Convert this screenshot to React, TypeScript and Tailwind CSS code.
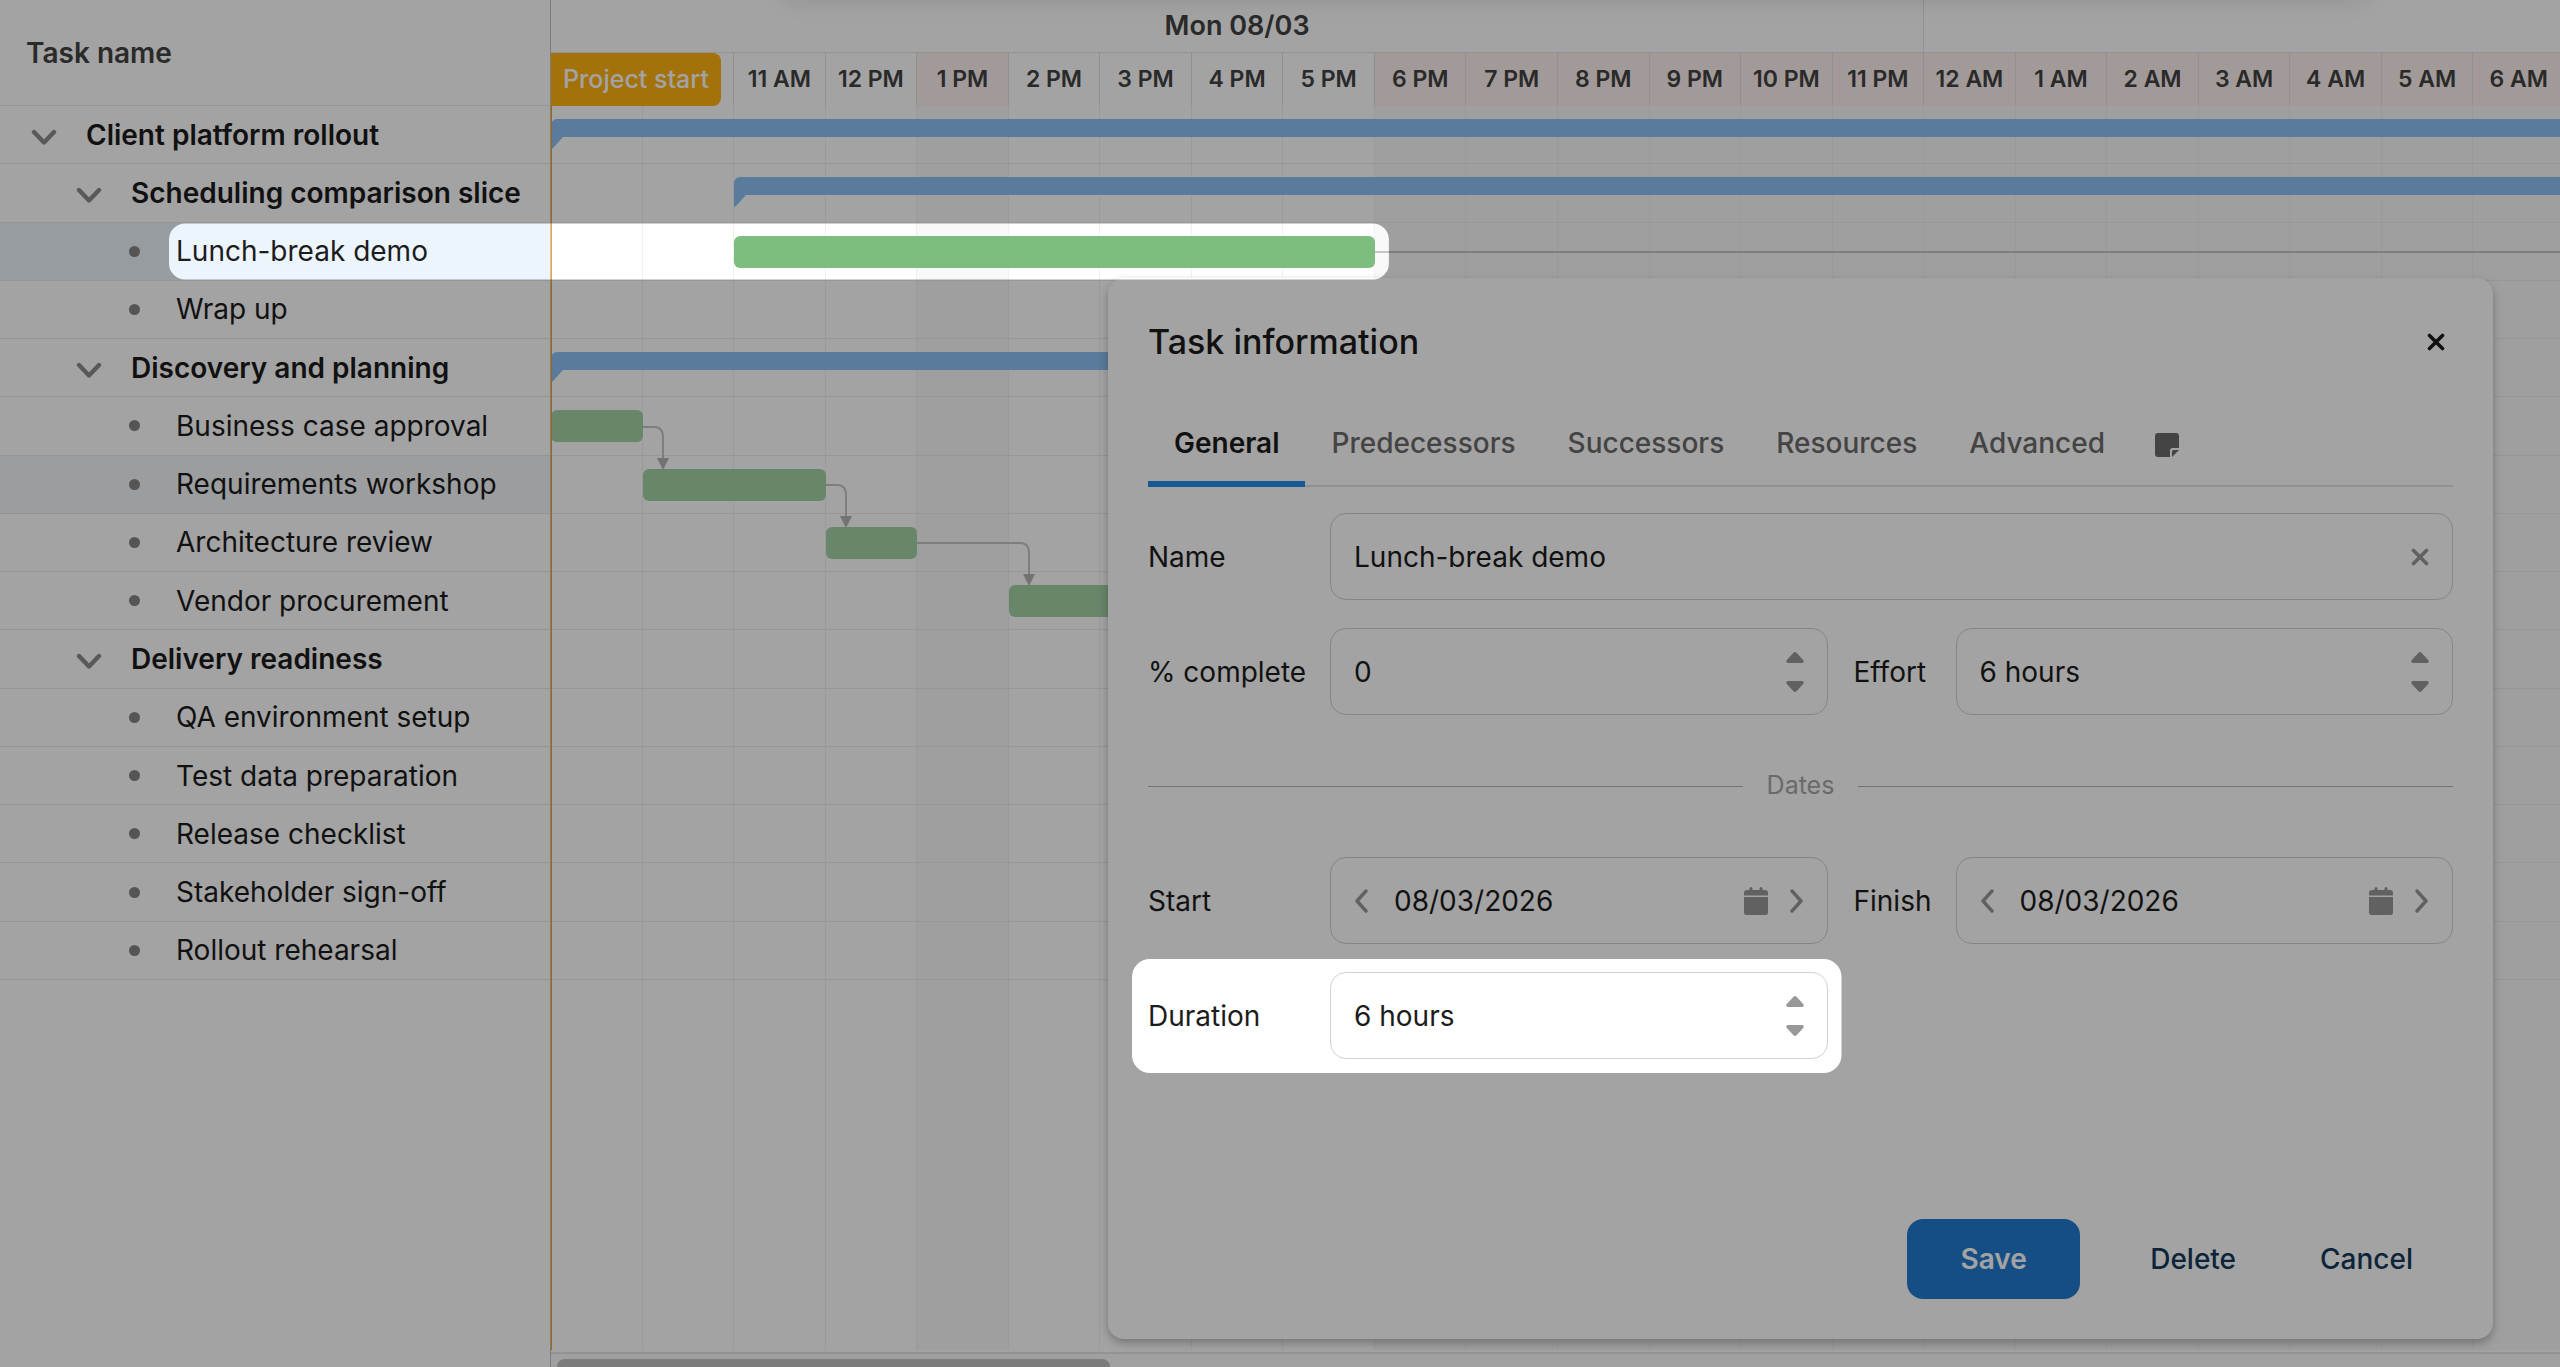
import { useLayoutEffect, useRef, useState } from 'react';
import type { ReactNode, RefObject } from 'react';
import clsx from 'clsx';

type Task = {
  name: string;
  level: number;
  parent?: boolean;
  start?: number;
  end?: number;
};

// Hours are counted from 9 AM, the left edge of the time axis
const HOURS_SHOWN = 22;

const tasks: Task[] = [
  { name: 'Client platform rollout', level: 0, parent: true, start: 0, end: 22 },
  { name: 'Scheduling comparison slice', level: 1, parent: true, start: 2, end: 22 },
  { name: 'Lunch-break demo', level: 2, start: 2, end: 9 },
  { name: 'Wrap up', level: 2 },
  { name: 'Discovery and planning', level: 1, parent: true, start: 0, end: 12 },
  { name: 'Business case approval', level: 2, start: 0, end: 1 },
  { name: 'Requirements workshop', level: 2, start: 1, end: 3 },
  { name: 'Architecture review', level: 2, start: 3, end: 4 },
  { name: 'Vendor procurement', level: 2, start: 5, end: 8 },
  { name: 'Delivery readiness', level: 1, parent: true },
  { name: 'QA environment setup', level: 2 },
  { name: 'Test data preparation', level: 2 },
  { name: 'Release checklist', level: 2 },
  { name: 'Stakeholder sign-off', level: 2 },
  { name: 'Rollout rehearsal', level: 2 },
];

const SELECTED = 2;
const HOVERED = 6;

const hours = Array.from({ length: HOURS_SHOWN }, (_, i) => {
  const h = (i + 9) % 24;
  return {
    label: `${h % 12 === 0 ? 12 : h % 12} ${h < 12 ? 'AM' : 'PM'}`,
    nonWorking: h === 13 || h >= 18 || h < 8,
  };
});

const tabs = ['General', 'Predecessors', 'Successors', 'Resources', 'Advanced'];

const levelPadding = ['pl-6', 'pl-[69px]', 'pl-[114px]'];

const percent = (h: number) => `${(h / HOURS_SHOWN) * 100}%`;

function CloseIcon({ className }: { className?: string }) {
  return (
    <svg viewBox="0 0 18 18" className={clsx('size-[18px]', className)} fill="none" stroke="currentColor" strokeWidth="3.6" strokeLinecap="round">
      <path d="M2.5 2.5 15.5 15.5M15.5 2.5 2.5 15.5" />
    </svg>
  );
}

function Chevron({ flip }: { flip?: boolean }) {
  return (
    <svg viewBox="0 0 14 24" className={clsx('h-6 w-3.5', flip && 'rotate-180')} fill="none" stroke="currentColor" strokeWidth="3.4" strokeLinecap="round" strokeLinejoin="round">
      <path d="M12 2 3 12l9 10" />
    </svg>
  );
}

function CalendarIcon() {
  return (
    <svg viewBox="0 0 24 28" className="h-7 w-6" fill="currentColor">
      <path d="M5.5 1.5a1.5 1.5 0 0 1 3 0V3h7V1.500a1.500 1.500 0 0 1 3 0V3H21a3 3 0 0 1 3 3v2.500H0V6a3 3 0 0 1 3-3h2.500Z" />
      <path d="M0 10h24v15.500a2.500 2.500 0 0 1-2.500 2.500h-19A2.500 2.500 0 0 1 0 25.500Z" />
    </svg>
  );
}

function NoteIcon() {
  return (
    <svg viewBox="0 0 24 24" className="size-6" fill="currentColor">
      <path d="M3 0h18a3 3 0 0 1 3 3v12h-6.500A2.500 2.500 0 0 0 15 17.500V24H3a3 3 0 0 1-3-3V3a3 3 0 0 1 3-3Z" />
      <path d="M17 24v-5.500a1.500 1.500 0 0 1 1.500-1.500H24Z" />
    </svg>
  );
}

function TreePane({ nameRef }: { nameRef: RefObject<HTMLSpanElement | null> }) {
  return (
    <div role="treegrid" className="w-[550px] shrink-0">
      <div className="flex h-[106px] items-center border-b border-[#e9e9e9] px-[26px] font-semibold text-[#424242]">Task name</div>
      <div className="grid h-[874px] auto-rows-fr">
        {tasks.map((task, i) => (
          <div
            key={task.name}
            role="row"
            className={clsx(
              'flex items-center gap-[22px] border-b border-[#e9e9e9]',
              levelPadding[task.level],
              i === SELECTED && 'bg-[#ecf4fc]',
              i === HOVERED && 'bg-[#f4f6f9]'
            )}
          >
            {task.parent ? (
              <button type="button" aria-label={`Collapse ${task.name}`} className="flex w-10 justify-center text-[#8c8c8c]">
                <svg viewBox="0 0 26 18" className="mt-1 h-[18px] w-[26px]" fill="none" stroke="currentColor" strokeWidth="4.400" strokeLinecap="round" strokeLinejoin="round">
                  <path d="M3 4 13 14.500 23 4" />
                </svg>
              </button>
            ) : (
              <span className="flex w-10 justify-center">
                <span className="size-[11px] rounded-full bg-[#858585]" />
              </span>
            )}
            <span ref={i === SELECTED ? nameRef : undefined} className={clsx('whitespace-nowrap', task.parent && 'font-semibold')}>
              {task.name}
            </span>
          </div>
        ))}
      </div>
    </div>
  );
}

function Dependencies() {
  return (
    <svg className="pointer-events-none absolute inset-0 size-full" fill="none" stroke="#c6c6c6" strokeWidth="2">
      <path d="M824 146H2200" />
      <path d="M92 321h11q9 0 9 10v24M275 379h11q9 0 9 10v24M366 437h103q9 0 9 10v24" />
      <g fill="#b4b4b4" stroke="none">
        <path d="M106 352h12l-6 12zM289 410h12l-6 12zM472 468h12l-6 12z" />
      </g>
    </svg>
  );
}

function TimeAxis({ barRef }: { barRef: RefObject<HTMLDivElement | null> }) {
  return (
    <div className="flex min-w-0 flex-1 flex-col overflow-hidden border-l border-[#c4c4c4]">
      <div className="flex w-[2014px] flex-1 flex-col">
        <div className="grid h-[53px] grid-cols-22 border-b border-[#e6e6e6] text-[27px] font-semibold text-[#424242]">
          <div className="col-span-15 flex items-center justify-center border-r border-[#e4e4e4]">Mon 08/03</div>
        </div>
        <div className="grid h-[53px] grid-cols-22 text-[23px] font-semibold text-[#424242]">
          {/* The project start flag covers the first two hours */}
          <div className="col-span-2 flex border-r border-[#e2e2e2]">
            <div className="flex w-[170px] items-center justify-center rounded-r-lg bg-[#ffb210] text-[25px] font-medium text-white">Project start</div>
          </div>
          {hours.slice(2).map((hour) => (
            <div
              key={hour.label}
              className={clsx('flex items-center justify-center border-r border-[#e2e2e2] whitespace-nowrap', hour.nonWorking && 'bg-[#fcf1f0]')}
            >
              {hour.label}
            </div>
          ))}
        </div>

        <div className="relative flex-1">
          <div className="absolute inset-0 grid grid-cols-22">
            {hours.map((hour) => (
              <div key={hour.label} className={clsx('border-r border-[#f1f1f1]', hour.nonWorking && 'bg-[#f9f9f9]')} />
            ))}
          </div>
          <div className="relative grid h-[874px] auto-rows-fr">
            {tasks.map((task, i) => (
              <div key={task.name} className="relative border-b border-[#ececec]">
                {task.start !== undefined && task.end !== undefined && (
                  <div
                    ref={i === SELECTED ? barRef : undefined}
                    className={clsx(
                      'absolute top-[13px]',
                      task.parent ? 'h-[18px] rounded-t-md bg-[#8ec0f2]' : 'h-8 rounded-md',
                      !task.parent && (i === SELECTED ? 'z-10 bg-[#7cbd80]' : 'bg-[#a2d2a6]')
                    )}
                    style={{ left: percent(task.start), width: percent(task.end - task.start) }}
                  >
                    {task.parent && (
                      <svg viewBox="0 0 12 12" className="absolute top-full left-0 size-3" fill="#8ec0f2">
                        <path d="M0 0h12L2 11q-1 1-2 0z" />
                      </svg>
                    )}
                  </div>
                )}
              </div>
            ))}
          </div>
          <Dependencies />
          <div className="absolute inset-y-0 left-0 w-px bg-[#f5a623]" />
        </div>
      </div>
      <div className="mt-0.5 h-[15px] border-t-2 border-[#e6e6e6] bg-[#fafafa] px-1.5 pt-[5px]">
        <div className="h-4 w-[553px] rounded-lg bg-[#c2c2c2]" />
      </div>
    </div>
  );
}

function FieldBox({ children, className, boxRef }: { children: ReactNode; className?: string; boxRef?: RefObject<HTMLDivElement | null> }) {
  return (
    <div ref={boxRef} className={clsx('flex h-[87px] min-w-0 items-center rounded-2xl border border-[#d2d2d2] px-[23px]', className)}>
      {children}
    </div>
  );
}

function SpinnerField({ id, value, boxRef }: { id: string; value: string; boxRef?: RefObject<HTMLDivElement | null> }) {
  return (
    <FieldBox boxRef={boxRef}>
      <input id={id} defaultValue={value} className="min-w-0 flex-1 bg-transparent outline-none" />
      <div className="flex flex-col gap-[18px] text-[#989898]">
        <button type="button" aria-label="Increase">
          <svg viewBox="0 0 18 11" className="h-[11px] w-[18px]" fill="currentColor">
            <path d="M7.500 .8q1.500-1.500 3 0L17.200 8q1.500 2.500-1.200 3H2Q-.7 10.500.8 8z" />
          </svg>
        </button>
        <button type="button" aria-label="Decrease">
          <svg viewBox="0 0 18 11" className="h-[11px] w-[18px] rotate-180" fill="currentColor">
            <path d="M7.500 .8q1.500-1.500 3 0L17.200 8q1.500 2.500-1.200 3H2Q-.7 10.500.8 8z" />
          </svg>
        </button>
      </div>
    </FieldBox>
  );
}

function DateField({ id, value }: { id: string; value: string }) {
  return (
    <FieldBox className="text-[#989898]">
      <button type="button" aria-label="Previous day">
        <Chevron />
      </button>
      <input id={id} defaultValue={value} className="ml-[26px] min-w-0 flex-1 bg-transparent text-[#1c1c1c] outline-none" />
      <button type="button" aria-label="Pick a date">
        <CalendarIcon />
      </button>
      <button type="button" aria-label="Next day" className="ml-[22px]">
        <Chevron flip />
      </button>
    </FieldBox>
  );
}

function TaskEditor({ labelRef, boxRef }: { labelRef: RefObject<HTMLLabelElement | null>; boxRef: RefObject<HTMLDivElement | null> }) {
  return (
    <div
      role="dialog"
      aria-labelledby="editor-title"
      className="absolute top-[278px] right-[67px] bottom-7 left-[1108px] flex flex-col rounded-2xl bg-white px-10 pb-10 shadow-[0_4px_10px_rgba(0,0,0,0.28)]"
    >
      <div className="flex h-[127px] items-center justify-between pr-2">
        <h2 id="editor-title" className="text-[34px] font-medium">Task information</h2>
        <button type="button" aria-label="Close">
          <CloseIcon />
        </button>
      </div>

      <div role="tablist" className="flex h-[82px] border-b-2 border-[#e2e2e2] font-medium text-[#6b6b6b]">
        {tabs.map((tab, i) => (
          <button
            key={tab}
            type="button"
            role="tab"
            aria-selected={i === 0}
            className={clsx('-mb-0.5 border-b-[6px] px-[26px]', i === 0 ? 'border-[#258bea] font-semibold text-[#1c1c1c]' : 'border-transparent')}
          >
            {tab}
          </button>
        ))}
        <button type="button" role="tab" aria-label="Notes" className="px-6">
          <NoteIcon />
        </button>
      </div>

      <div className="mt-[26px] grid grid-cols-[182px_1fr_128px_1fr] items-center gap-y-7">
        <label htmlFor="name">Name</label>
        <FieldBox className="col-span-3">
          <input id="name" defaultValue="Lunch-break demo" className="min-w-0 flex-1 bg-transparent outline-none" />
          <button type="button" aria-label="Clear" className="text-[#989898]">
            <CloseIcon />
          </button>
        </FieldBox>

        <label htmlFor="complete">% complete</label>
        <SpinnerField id="complete" value="0" />
        <label htmlFor="effort" className="pl-[26px]">Effort</label>
        <SpinnerField id="effort" value="6 hours" />

        <div className="col-span-4 flex h-[86px] items-center gap-6 text-[25px] text-[#a6a6a6]">
          <span className="h-px flex-1 bg-[#b4b4b4]" />
          Dates
          <span className="h-px flex-1 bg-[#b4b4b4]" />
        </div>

        <label htmlFor="start">Start</label>
        <DateField id="start" value="08/03/2026" />
        <label htmlFor="finish" className="pl-[26px]">Finish</label>
        <DateField id="finish" value="08/03/2026" />

        <label ref={labelRef} htmlFor="duration">Duration</label>
        <SpinnerField id="duration" value="6 hours" boxRef={boxRef} />
      </div>

      <div className="mt-auto flex h-20 justify-end gap-1 font-medium text-[#133a5c]">
        <button type="button" className="mr-[26px] w-[173px] rounded-2xl bg-[#217bd1] font-semibold text-white">Save</button>
        <button type="button" className="px-10">Delete</button>
        <button type="button" className="px-10">Cancel</button>
      </div>
    </div>
  );
}

const roundedRect = (l: number, t: number, r: number, b: number, q: number) =>
  `M${l + q} ${t}H${r - q}a${q} ${q} 0 0 1 ${q} ${q}V${b - q}a${q} ${q} 0 0 1 ${-q} ${q}H${l + q}a${q} ${q} 0 0 1 ${-q} ${-q}V${t + q}a${q} ${q} 0 0 1 ${q} ${-q}Z`;

export default function App() {
  const nameRef = useRef<HTMLSpanElement>(null);
  const barRef = useRef<HTMLDivElement>(null);
  const labelRef = useRef<HTMLLabelElement>(null);
  const boxRef = useRef<HTMLDivElement>(null);
  const [holes, setHoles] = useState('');

  // Keep the spotlights on the task row and on the duration field
  useLayoutEffect(() => {
    function measure() {
      if (!nameRef.current || !barRef.current || !labelRef.current || !boxRef.current) return;
      const name = nameRef.current.getBoundingClientRect();
      const bar = barRef.current.getBoundingClientRect();
      const label = labelRef.current.getBoundingClientRect();
      const box = boxRef.current.getBoundingClientRect();
      setHoles(
        roundedRect(name.left - 7, bar.top - 12, bar.right + 14, bar.bottom + 12, 16) +
          roundedRect(label.left - 16, box.top - 13, box.right + 14, box.bottom + 14, 18)
      );
    }
    measure();
    window.addEventListener('resize', measure);
    return () => window.removeEventListener('resize', measure);
  }, []);

  return (
    <main className="relative flex h-screen min-h-[1300px] overflow-hidden bg-white font-['Inter',sans-serif] text-[28px] text-[#1c1c1c]">
      <TreePane nameRef={nameRef} />
      <TimeAxis barRef={barRef} />
      <div className="absolute -top-10 right-[190px] left-[780px] h-9 rounded-2xl shadow-[0_0_28px_rgba(0,0,0,0.16)]" />
      <TaskEditor labelRef={labelRef} boxRef={boxRef} />
      <svg className="pointer-events-none absolute inset-0 size-full" fill="#000" fillOpacity="0.36" fillRule="evenodd">
        <path d={`M0 0H9999V9999H0Z${holes}`} />
      </svg>
    </main>
  );
}
